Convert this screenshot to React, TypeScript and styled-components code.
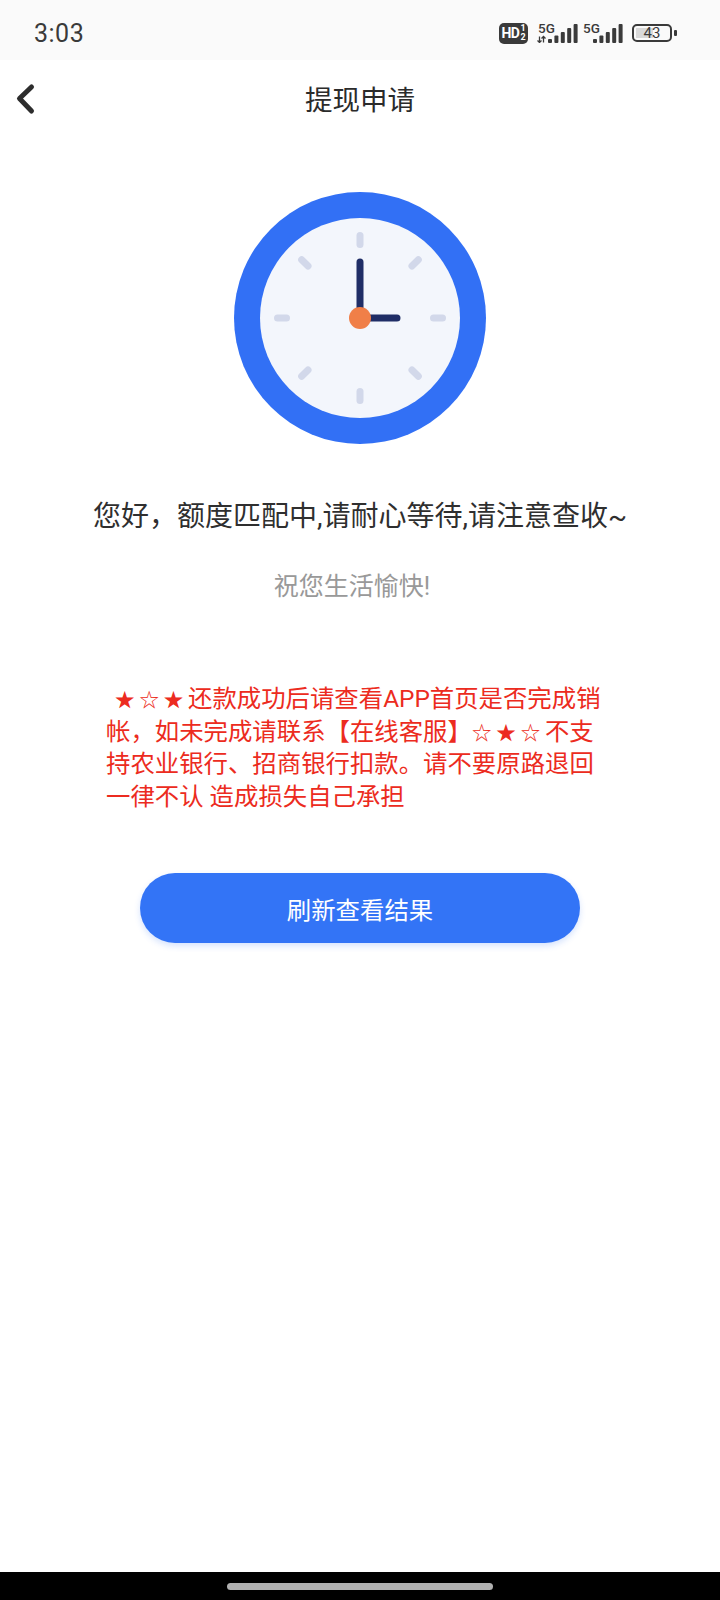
import React from 'react';
import styled, { createGlobalStyle } from 'styled-components';

const GlobalStyle = createGlobalStyle`
  html, body {
    margin: 0;
    padding: 0;
    background: #fff;
  }
  body {
    font-family: "Roboto", "Noto Sans CJK SC", sans-serif;
    text-spacing-trim: space-all;
  }
`;

const Page = styled.div`
  width: 720px;
  height: 1600px;
  display: flex;
  flex-direction: column;
  background: #fff;
  overflow: hidden;
`;

const StatusBar = styled.div`
  height: 60px;
  flex: none;
  box-sizing: border-box;
  display: flex;
  align-items: center;
  justify-content: space-between;
  padding: 6px 48px 0 34px;
  background: #fafafa;
  color: #3a3a3a;
`;

const Time = styled.span`
  font-size: 25px;
  letter-spacing: 0.5px;
`;

const StatusIcons = styled.div`
  display: flex;
  align-items: center;
  gap: 4px;
`;

const HdBadge = styled.div`
  width: 29px;
  height: 21px;
  margin-right: 5px;
  display: flex;
  align-items: center;
  justify-content: center;
  gap: 1px;
  border-radius: 5px;
  background: #3a3a3a;
  color: #fff;
  font-size: 14px;
  font-weight: 700;
  letter-spacing: -0.5px;
`;

const HdSims = styled.span`
  display: flex;
  flex-direction: column;
  font-size: 9px;
  line-height: 9px;
  letter-spacing: 0;
`;

const Signal = styled.div`
  position: relative;
  width: 41px;
  height: 20px;
`;

const SignalLabel = styled.span`
  position: absolute;
  left: 1px;
  top: -2px;
  font-size: 13.5px;
  font-weight: 500;
  line-height: 14px;
`;

const SignalBars = styled.svg`
  position: absolute;
  inset: 0;
`;

const Battery = styled.div`
  position: relative;
  width: 40px;
  height: 18px;
  margin-left: 5px;
  box-sizing: border-box;
  border: 2px solid #3a3a3a;
  border-radius: 5px;
  display: flex;
  align-items: center;
  justify-content: center;
  font-size: 15px;

  &::before {
    content: '';
    position: absolute;
    left: 2px;
    top: 2px;
    bottom: 2px;
    width: 17px;
    background: #d9d9d9;
  }

  &::after {
    content: '';
    position: absolute;
    right: -7px;
    top: 4px;
    width: 3px;
    height: 6px;
    border-radius: 1px;
    background: #3a3a3a;
  }
`;

const BatteryValue = styled.span`
  position: relative;
`;

const NavBar = styled.div`
  position: relative;
  height: 78px;
  flex: none;
  box-sizing: border-box;
  padding-bottom: 2px;
  display: flex;
  align-items: center;
  justify-content: center;
`;

const BackIcon = styled.svg`
  position: absolute;
  left: 12px;
  top: 20px;
`;

const Title = styled.h1`
  margin: 0;
  font-size: 27.5px;
  font-weight: 400;
  color: #2b2b2b;
`;

const Content = styled.main`
  flex: 1;
  display: flex;
  flex-direction: column;
  align-items: center;
  padding-top: 54px;
`;

const Message = styled.p`
  margin: 53px 0 0;
  font-size: 28px;
  line-height: 40px;
  color: #2f2f2f;
`;

const Greeting = styled.p`
  margin: 32px 16px 0 0;
  font-size: 25px;
  line-height: 36px;
  color: #999;
`;

const Notice = styled.div`
  margin: 78px 0 0 106px;
  align-self: flex-start;
  font-size: 24.4px;
  color: #ec2b20;
`;

const NoticeLine = styled.p`
  margin: 0;
  height: 32.6px;
  line-height: 32.6px;
  white-space: pre;
`;

const Stars = styled.span<{ $lead?: boolean }>`
  display: inline-block;
  width: 73px;
  margin-left: ${(p) => (p.$lead ? '9px' : '0')};
  font-size: 19.5px;
  line-height: 1;
  letter-spacing: 4.9px;
`;

const RefreshButton = styled.button`
  width: 440px;
  height: 70px;
  margin-top: 60px;
  border: 0;
  border-radius: 35px;
  background: #3374f6;
  box-shadow: 0 3px 6px rgba(51, 116, 246, 0.2);
  color: #fff;
  font: inherit;
  font-size: 24.4px;
`;

const BottomBar = styled.div`
  height: 28px;
  flex: none;
  display: flex;
  align-items: center;
  justify-content: center;
  background: #000;
`;

const HomeIndicator = styled.div`
  width: 266px;
  height: 7px;
  border-radius: 4px;
  background: #b0b0b0;
`;

const barTops = [16, 12.5, 9, 5, 1];

const SignalIcon: React.FC<{ arrows?: boolean }> = ({ arrows }) => (
  <Signal>
    <SignalLabel>5G</SignalLabel>
    <SignalBars width="41" height="20" viewBox="0 0 41 20">
      {arrows && (
        <path
          d="M2.5 13.5v6M0.5 17.5l2 2 2-2M6.5 19.5v-6M4.5 15.5l2-2 2 2"
          fill="none"
          stroke="#3a3a3a"
          strokeWidth="1.3"
        />
      )}
      {barTops.map((top, i) => (
        <rect key={i} x={11 + i * 6.4} y={top} width="4" height={20 - top} rx="1" fill="#3a3a3a" />
      ))}
    </SignalBars>
  </Signal>
);

const ClockIcon: React.FC = () => {
  const angles = [0, 45, 90, 135, 180, 225, 270, 315];
  return (
    <svg width="252" height="252" viewBox="0 0 252 252">
      <circle cx="126" cy="126" r="126" fill="#3270f5" />
      <circle cx="126" cy="126" r="100" fill="#f3f6fc" />
      {angles.map((a) => (
        <line
          key={a}
          x1="126"
          y1="43.5"
          x2="126"
          y2="52.5"
          transform={`rotate(${a} 126 126)`}
          stroke="#d2d8ea"
          strokeWidth="7"
          strokeLinecap="round"
        />
      ))}
      <path
        d="M126 70V126H163"
        fill="none"
        stroke="#1f2d66"
        strokeWidth="7"
        strokeLinecap="round"
        strokeLinejoin="round"
      />
      <circle cx="126" cy="126" r="11" fill="#f07f48" />
    </svg>
  );
};

const App: React.FC = () => (
  <Page lang="zh-CN">
    <GlobalStyle />
    <StatusBar>
      <Time>3:03</Time>
      <StatusIcons>
        <HdBadge>
          HD
          <HdSims>
            <span>1</span>
            <span>2</span>
          </HdSims>
        </HdBadge>
        <SignalIcon arrows />
        <SignalIcon />
        <Battery>
          <BatteryValue>43</BatteryValue>
        </Battery>
      </StatusIcons>
    </StatusBar>
    <NavBar>
      <BackIcon width="26" height="36" viewBox="0 0 26 36">
        <path
          d="M19.5 7L7.5 18.5 19.5 31"
          fill="none"
          stroke="#2d2d2d"
          strokeWidth="5"
          strokeLinecap="round"
          strokeLinejoin="round"
        />
      </BackIcon>
      <Title>提现申请</Title>
    </NavBar>
    <Content>
      <ClockIcon />
      <Message>您好，额度匹配中,请耐心等待,请注意查收~</Message>
      <Greeting>祝您生活愉快!</Greeting>
      <Notice>
        <NoticeLine>
          <Stars $lead>★☆★</Stars>还款成功后请查看APP首页是否完成销
        </NoticeLine>
        <NoticeLine>
          帐，如未完成请联系【在线客服】<Stars>☆★☆</Stars>不支
        </NoticeLine>
        <NoticeLine>持农业银行、招商银行扣款。请不要原路退回</NoticeLine>
        <NoticeLine>一律不认 造成损失自己承担</NoticeLine>
      </Notice>
      <RefreshButton>刷新查看结果</RefreshButton>
    </Content>
    <BottomBar>
      <HomeIndicator />
    </BottomBar>
  </Page>
);

export default App;
